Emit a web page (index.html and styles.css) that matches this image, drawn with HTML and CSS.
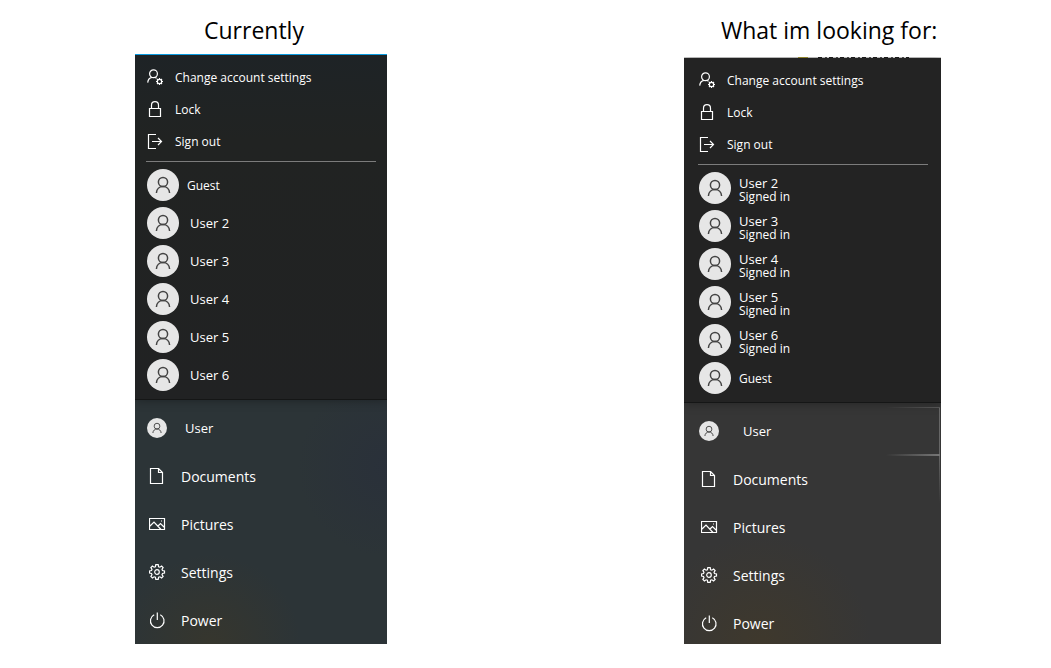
FILE: index.html
```
<!DOCTYPE html>
<html lang="en">
<head>
  <meta charset="UTF-8">
  <meta name="viewport" content="width=device-width, initial-scale=1.0">
  <title>Start menu user list</title>
  <link rel="stylesheet" href="styles.css">
</head>
<body>
  <!-- icons used by both menus -->
  <svg class="sprite" aria-hidden="true">
    <symbol id="i-account" viewBox="0 0 17 17">
      <circle cx="6.5" cy="4.8" r="3.9"/>
      <path d="M.7 13.6c.3-2.9 2-4.9 4.2-5.3M8.2 8.4l1.4.8"/>
      <circle cx="12.5" cy="12.5" r="2.2"/>
      <path d="M12.5 9v1.4M12.5 14.6V16M9 12.5h1.4M14.6 12.5H16M10 10l1 1M14 14l1 1M15 10l-1 1M11 14l-1 1"/>
    </symbol>
    <symbol id="i-lock" viewBox="0 0 17 17">
      <path d="M2.5 7.5h11v8h-11zM4.5 7.5V4.2a3.5 3.5 0 0 1 7 0v3.3"/>
    </symbol>
    <symbol id="i-signout" viewBox="0 0 17 17">
      <path d="M9 1.5H1.5v14H9M5 8.5h9.5M11 5l3.5 3.5L11 12"/>
    </symbol>
    <symbol id="i-person" viewBox="0 0 32 32">
      <circle cx="16" cy="13" r="4.6"/>
      <path d="M9.4 24c.2-3.9 3-6.4 6.6-6.4s6.4 2.5 6.6 6.4"/>
    </symbol>
    <symbol id="i-document" viewBox="0 0 17 17">
      <path d="M1.5.5h8l4 4v11h-12zM9.5.5v4h4"/>
    </symbol>
    <symbol id="i-picture" viewBox="0 0 17 17">
      <path d="M.5 2.5h15v11H.5zM1 10l4-4 7 7.5M9 10l2.5-2.5 4 4"/>
      <path d="M12 5h1"/>
    </symbol>
    <symbol id="i-gear" viewBox="0 0 17 17">
      <circle cx="8" cy="8" r="2.3"/>
      <path d="M6.8.7h2.4l.4 2 1.3.5 1.7-1.1 1.5 1.5-1.1 1.7.5 1.3 2 .4v2l-2 .4-.5 1.3 1.1 1.7-1.5 1.5-1.7-1.1-1.3.5-.4 2H6.8l-.4-2-1.3-.5-1.7 1.1-1.5-1.5L3 10.7l-.5-1.3-2-.4V7l2-.4L3 5.3 1.9 3.6l1.5-1.5 1.7 1.1 1.3-.5z"/>
    </symbol>
    <symbol id="i-power" viewBox="0 0 17 17">
      <path d="M5.2 2.8a6.8 6.8 0 1 0 6.1 0M8.3.5v7.5"/>
    </symbol>
  </svg>

  <main class="compare">
    <section class="side">
      <h1>Currently</h1>
      <div class="start start-now">
        <div class="flyout">
          <ul class="actions">
            <li><button><svg><use href="#i-account"/></svg>Change account settings</button></li>
            <li><button><svg><use href="#i-lock"/></svg>Lock</button></li>
            <li><button><svg><use href="#i-signout"/></svg>Sign out</button></li>
          </ul>
          <ul class="users">
            <li><button><svg class="avatar"><use href="#i-person"/></svg><span>Guest</span></button></li>
            <li><button><svg class="avatar"><use href="#i-person"/></svg><span class="name">User 2</span></button></li>
            <li><button><svg class="avatar"><use href="#i-person"/></svg><span class="name">User 3</span></button></li>
            <li><button><svg class="avatar"><use href="#i-person"/></svg><span class="name">User 4</span></button></li>
            <li><button><svg class="avatar"><use href="#i-person"/></svg><span class="name">User 5</span></button></li>
            <li><button><svg class="avatar"><use href="#i-person"/></svg><span class="name">User 6</span></button></li>
          </ul>
        </div>
        <ul class="places">
          <li><button class="me"><svg class="avatar"><use href="#i-person"/></svg>User</button></li>
          <li><button><svg><use href="#i-document"/></svg>Documents</button></li>
          <li><button><svg><use href="#i-picture"/></svg>Pictures</button></li>
          <li><button><svg><use href="#i-gear"/></svg>Settings</button></li>
          <li><button><svg><use href="#i-power"/></svg>Power</button></li>
        </ul>
      </div>
    </section>

    <section class="side side-wanted">
      <h1>What im looking for:</h1>
      <div class="start start-wanted">
        <div class="sliver"></div>
        <div class="flyout">
          <ul class="actions">
            <li><button><svg><use href="#i-account"/></svg>Change account settings</button></li>
            <li><button><svg><use href="#i-lock"/></svg>Lock</button></li>
            <li><button><svg><use href="#i-signout"/></svg>Sign out</button></li>
          </ul>
          <ul class="users">
            <li><button><svg class="avatar"><use href="#i-person"/></svg><span class="name">User 2<small>Signed in</small></span></button></li>
            <li><button><svg class="avatar"><use href="#i-person"/></svg><span class="name">User 3<small>Signed in</small></span></button></li>
            <li><button><svg class="avatar"><use href="#i-person"/></svg><span class="name">User 4<small>Signed in</small></span></button></li>
            <li><button><svg class="avatar"><use href="#i-person"/></svg><span class="name">User 5<small>Signed in</small></span></button></li>
            <li><button><svg class="avatar"><use href="#i-person"/></svg><span class="name">User 6<small>Signed in</small></span></button></li>
            <li><button><svg class="avatar"><use href="#i-person"/></svg><span>Guest</span></button></li>
          </ul>
        </div>
        <ul class="places">
          <li class="lit"><button class="me"><svg class="avatar"><use href="#i-person"/></svg>User</button></li>
          <li><button><svg><use href="#i-document"/></svg>Documents</button></li>
          <li><button><svg><use href="#i-picture"/></svg>Pictures</button></li>
          <li><button><svg><use href="#i-gear"/></svg>Settings</button></li>
          <li><button><svg><use href="#i-power"/></svg>Power</button></li>
        </ul>
      </div>
    </section>
  </main>
</body>
</html>
```
FILE: styles.css
```
* {
  margin: 0; padding: 0; box-sizing: border-box;
}
body {
  background: #fff;
  font-family: "Open Sans", "Noto Sans", sans-serif;
}
ul {
  list-style: none;
}
.sprite {
  display: none;
}
.compare {
  display: grid;
  grid-template-columns: minmax(0, 252fr) minmax(0, 257fr);
  column-gap: 297px;
  padding: 14px 110px 24px 135px;
}
.side {
  display: flex;
  flex-direction: column;
}
h1 {
  height: 40px;
  padding-left: 69px;
  font: 23px/32px "Open Sans", sans-serif;
  color: #000;
  white-space: nowrap;
}
.side-wanted h1 {
  height: 43px;
  padding-left: 37px;
}

/* start menu */
.start {
  flex: 1;
  display: flex;
  flex-direction: column;
  overflow: hidden;
}
.start-now {
  border-top: 1px solid #0a9be0;
  background:
    radial-gradient(circle at 30% 100%, rgba(64,56,36,.5), transparent 90px),
    radial-gradient(circle at 100% 70%, rgba(40,46,60,.6), transparent 90px),
    #2c3437;
}
.start-wanted {
  background:
    radial-gradient(circle at 30% 100%, rgba(68,58,38,.6), transparent 110px),
    #363636;
}
/* edge of the window behind the menu */
.sliver {
  height: 1px;
  background:
    repeating-linear-gradient(to right, #222 0 4px, #ddd 4px 7px, #555 7px 9px, #eee 9px 11px) 134px 0 / 91px 1px no-repeat,
    linear-gradient(#a99b35, #a99b35) 114px 0 / 10px 1px no-repeat,
    #d8d8d8;
}
.flyout {
  padding: 6px 11px 5px;
  background: linear-gradient(#1e2326, #212322 25%, #212223);
  border-bottom: 1px solid #151616;
  box-shadow: 0 0 10px rgba(0,0,0,.35);
}
.start-wanted .flyout {
  padding: 6px 13px 5px 14px;
  background: #232323;
}
button {
  display: flex;
  align-items: center;
  width: 100%;
  height: 100%;
  border: none;
  background: none;
  color: #fff;
  font: inherit;
  text-align: left;
  cursor: pointer;
}
svg {
  flex: none;
  width: 17px;
  height: 17px;
  fill: none;
  stroke: #fff;
  stroke-width: 1.2;
}
.avatar {
  width: 32px;
  height: 32px;
  border-radius: 50%;
  background: #e6e6e6;
  stroke: #444;
  stroke-width: 1.5;
}

.actions {
  padding-bottom: 4px;
  border-bottom: 1px solid #7c7c7c;
  font-size: 12px;
}
.actions li {
  height: 32px;
}
.actions button {
  gap: 11px;
  padding-left: 1px;
}
.users {
  padding: 4px 0 0 1px;
  font-size: 12px;
}
.users li {
  height: 38px;
}
.users button {
  gap: 8px;
}
.name {
  font-size: 13px;
  line-height: 14px;
}
.start-now .name {
  padding-left: 3px;
}
.start-wanted .name {
  padding-top: 3px;
}
small {
  display: block;
  font-size: 12px;
  line-height: 14px;
}

.places {
  padding: 4px 0 0 12px;
  font-size: 14px;
}
.start-wanted .places {
  padding-left: 15px;
  margin-bottom: -3px;
}
.places li {
  height: 48px;
}
.places button {
  gap: 15px;
  padding-left: 2px;
}
.places .me {
  gap: 18px;
  padding-left: 0;
  font-size: 13px;
}
.start-wanted .me {
  gap: 24px;
}
.me .avatar {
  width: 20px;
  height: 20px;
}

/* pointer glow on the hovered row */
.lit {
  position: relative;
}
.lit::after {
  content: "";
  position: absolute;
  top: 0; right: 1px;
  width: 54px;
  height: 96px;
  background:
    linear-gradient(to right, transparent, #555) 0 0 / 100% 1px no-repeat,
    linear-gradient(to right, transparent, #777) 0 47px / 100% 2px no-repeat,
    linear-gradient(#666 50%, transparent) 100% 0 / 1px 100% no-repeat;
  pointer-events: none;
}
```
